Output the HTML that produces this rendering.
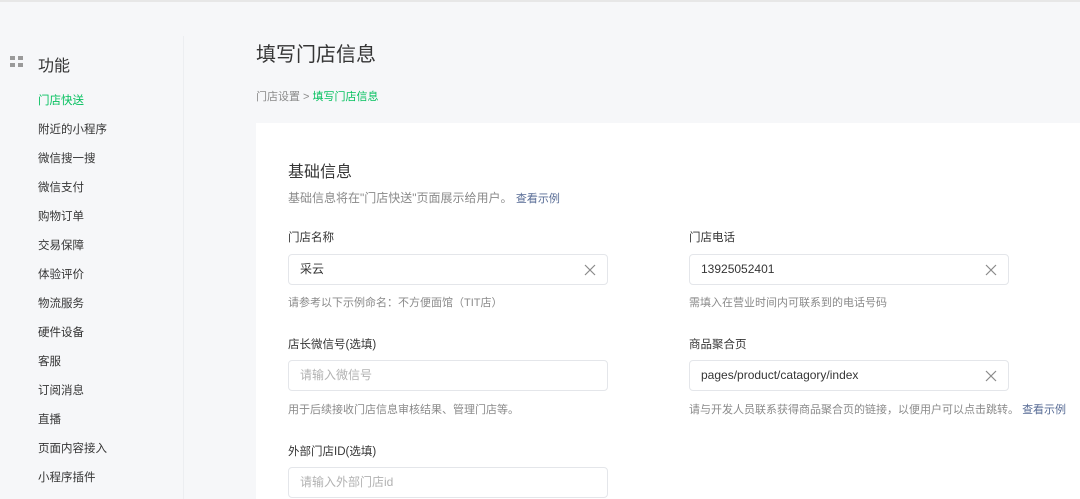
<!DOCTYPE html>
<html><head><meta charset="utf-8"><style>
body{margin:0;width:1080px;height:499px;overflow:hidden;background:#f6f7f9;font-family:"Liberation Sans","Noto Sans CJK SC",sans-serif;position:relative;color:#353535}
.top{position:absolute;left:0;top:0;width:1080px;height:2px;background:#e7e7e7}
.div{position:absolute;left:183px;top:36px;width:1px;height:463px;background:#eceef1}
.a{position:absolute;white-space:nowrap}
.nav{font-size:11.5px;color:#353535;left:38px}
.card{position:absolute;left:256px;top:123px;width:824px;height:376px;background:#fff}
.lab{font-size:11.5px;color:#353535}
.hint{font-size:11px;color:#8a8a8a}
.inp{position:absolute;width:320px;height:31px;border:1px solid #e4e6ea;border-radius:4px;box-sizing:border-box;background:#fff;font-size:12px;color:#353535;line-height:29px;padding-left:11px}
.inp.ph{color:#b2b2b2}
.x{position:absolute;right:11px;top:9px}
.link{color:#576b95}
</style></head><body>
<div class="top"></div>
<div class="div"></div>
<svg class="a" style="left:10px;top:56px" width="14" height="12"><rect x="0" y="0" width="5" height="4" fill="#9a9a9a"/><rect x="8" y="0" width="5" height="4" fill="#9a9a9a"/><rect x="0" y="7" width="5" height="4" fill="#9a9a9a"/><rect x="8" y="7" width="5" height="4" fill="#9a9a9a"/></svg>
<div class="a" style="left:38px;top:52px;font-size:16px">功能</div>
<div class="a nav" style="top:92px;color:#07c160">门店快送</div>
<div class="a nav" style="top:121px">附近的小程序</div>
<div class="a nav" style="top:150px">微信搜一搜</div>
<div class="a nav" style="top:179px">微信支付</div>
<div class="a nav" style="top:208px">购物订单</div>
<div class="a nav" style="top:237px">交易保障</div>
<div class="a nav" style="top:266px">体验评价</div>
<div class="a nav" style="top:295px">物流服务</div>
<div class="a nav" style="top:324px">硬件设备</div>
<div class="a nav" style="top:353px">客服</div>
<div class="a nav" style="top:382px">订阅消息</div>
<div class="a nav" style="top:411px">直播</div>
<div class="a nav" style="top:440px">页面内容接入</div>
<div class="a nav" style="top:469px">小程序插件</div>
<div class="a" style="left:256px;top:38px;font-size:20px;color:#353535">填写门店信息</div>
<div class="a" style="left:256px;top:88px;font-size:11px;color:#8a8a8a">门店设置 &gt; <span style="color:#07c160">填写门店信息</span></div>
<div class="card"></div>
<div class="a" style="left:288px;top:158px;font-size:16px">基础信息</div>
<div class="a hint" style="left:288px;top:189px;font-size:12px">基础信息将在"门店快送"页面展示给用户。 <span class="link" style="font-size:11px">查看示例</span></div>
<div class="a lab" style="left:288px;top:229px">门店名称</div>
<div class="inp" style="left:288px;top:254px">采云<svg class="x" width="12" height="12"><path d="M1 1L11 11M11 1L1 11" stroke="#8a8a8a" stroke-width="1.2"/></svg></div>
<div class="a hint" style="left:288px;top:294px">请参考以下示例命名：不方便面馆（TIT店）</div>
<div class="a lab" style="left:288px;top:336px">店长微信号(选填)</div>
<div class="inp ph" style="left:288px;top:360px">请输入微信号</div>
<div class="a hint" style="left:288px;top:401px">用于后续接收门店信息审核结果、管理门店等。</div>
<div class="a lab" style="left:288px;top:443px">外部门店ID(选填)</div>
<div class="inp ph" style="left:288px;top:467px">请输入外部门店id</div>
<div class="a lab" style="left:689px;top:229px">门店电话</div>
<div class="inp" style="left:689px;top:254px">13925052401<svg class="x" width="12" height="12"><path d="M1 1L11 11M11 1L1 11" stroke="#8a8a8a" stroke-width="1.2"/></svg></div>
<div class="a hint" style="left:689px;top:294px">需填入在营业时间内可联系到的电话号码</div>
<div class="a lab" style="left:689px;top:336px">商品聚合页</div>
<div class="inp" style="left:689px;top:360px">pages/product/catagory/index<svg class="x" width="12" height="12"><path d="M1 1L11 11M11 1L1 11" stroke="#8a8a8a" stroke-width="1.2"/></svg></div>
<div class="a hint" style="left:689px;top:401px">请与开发人员联系获得商品聚合页的链接，以便用户可以点击跳转。 <span class="link">查看示例</span></div>
</body></html>
